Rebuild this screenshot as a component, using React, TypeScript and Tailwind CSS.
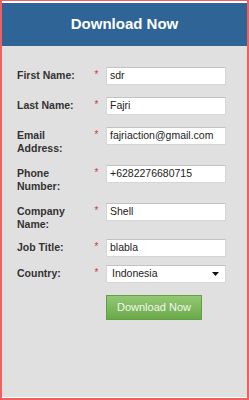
import type { ReactNode } from 'react'

const font = { fontFamily: '"Liberation Sans", Arial, sans-serif' }

function Row({ label, height, children }: { label: ReactNode; height: string; children: ReactNode }) {
  return (
    <div className={`flex items-start ${height}`}>
      <div className="w-[70px] pt-[2px] text-[10.5px] leading-[13px] font-bold text-[#333]">{label}</div>
      <div className="w-[19px] pt-[3px] text-center text-[10px] leading-[10px] text-[#d13b3b]">*</div>
      {children}
    </div>
  )
}

function Field({ value }: { value: string }) {
  return (
    <div className="flex h-[18px] w-[120px] items-center border border-[#d6d6d6] border-t-[#c2c2c2] bg-white px-[3px] text-[10.5px] text-[#222]">
      {value}
    </div>
  )
}

export default function App() {
  return (
    <div
      style={font}
      className="flex h-[400px] w-[249px] flex-col border-t border-r-2 border-b-2 border-l-2 border-[#f25f5f] bg-white pt-[2px] pb-[1px]"
    >
      <div className="flex h-[43px] items-center justify-center bg-[#2f6496] text-[15px] font-bold text-white">
        Download Now
      </div>
      <div className="flex-1 bg-[#e0e0e0] pt-[21px] pl-[15px]">
        <Row label="First Name:" height="h-[30px]">
          <Field value="sdr" />
        </Row>
        <Row label="Last Name:" height="h-[30px]">
          <Field value="Fajri" />
        </Row>
        <Row label="Email Address:" height="h-[38px]">
          <Field value="fajriaction@gmail.com" />
        </Row>
        <Row label="Phone Number:" height="h-[38px]">
          <Field value="+6282276680715" />
        </Row>
        <Row label="Company Name:" height="h-[36px]">
          <Field value="Shell" />
        </Row>
        <Row label="Job Title:" height="h-[26px]">
          <Field value="blabla" />
        </Row>
        <Row label="Country:" height="h-[30px]">
          <div className="flex h-[18px] w-[120px] items-center justify-between border border-[#d6d6d6] border-t-[#c2c2c2] bg-white pr-[6px] pl-[5px] text-[10.5px] text-[#222]">
            <span>Indonesia</span>
            <svg width="7" height="4" viewBox="0 0 7 4">
              <path d="M0 0h7L3.5 4z" fill="#111" />
            </svg>
          </div>
        </Row>
        <div className="pl-[89px]">
          <button
            type="button"
            className="flex h-[25px] w-[96px] items-center justify-center border border-[#62a043] bg-gradient-to-b from-[#93c873] to-[#6aa94a] text-[11px] text-[#f3f7ef]"
          >
            Download Now
          </button>
        </div>
      </div>
    </div>
  )
}
